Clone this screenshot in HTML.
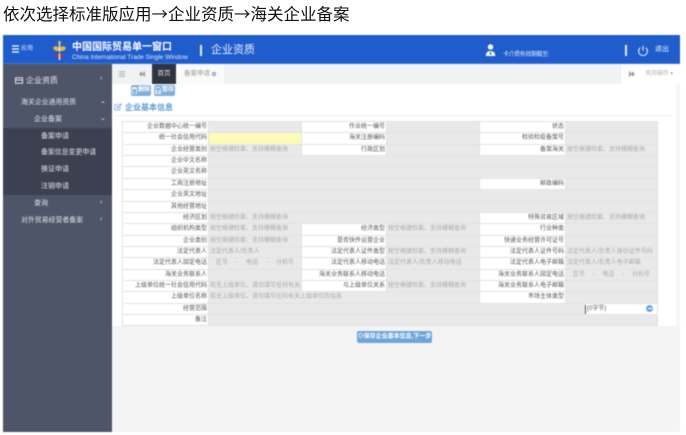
<!DOCTYPE html>
<html lang="zh">
<head>
<meta charset="utf-8">
<title>企业资质</title>
<style>
html,body{margin:0;padding:0;background:#fff;}
body{width:686px;height:435px;overflow:hidden;position:relative;font-family:"Liberation Sans","Noto Sans CJK SC",sans-serif;}
.a{position:absolute;white-space:nowrap;}
#title{left:3px;top:1px;font-size:16.5px;line-height:24px;color:#111;}
#title span{font-family:"Noto Sans CJK SC",sans-serif;}
#app{position:absolute;left:3px;top:35px;width:677px;height:397px;filter:blur(.5px);background:#fff;overflow:hidden;}
#head{left:0;top:0;width:677px;height:29px;background:#1f5ccc;border-bottom:1px solid #3d7bd8;box-sizing:border-box;}
#side{left:0;top:29px;width:109px;height:368px;background:#4e5568;}
#sub{left:0;top:93px;width:109px;height:67px;background:#3c4152;}
.m{color:#e2e4e9;font-size:7px;line-height:10px;}
.g{color:#e4e6ea;font-size:7px;line-height:10px;}
#tabs{left:109px;top:29px;width:509px;height:20px;background:#f1f2f3;}
#bottom{left:109px;top:291px;width:568px;height:106px;background:#f4f4f4;}
#grid{left:119px;top:86px;display:grid;grid-template-columns:85px 92px 84px 92px 85px 91px;grid-template-rows:repeat(18,10.36px);gap:1px;background:#e2e2e2;border:1px solid #e2e2e2;font-size:6px;line-height:10.36px;color:#555;}
#grid div{background:#e9e9e9;overflow:hidden;white-space:nowrap;}
#grid .l{background:#fff;text-align:right;padding-right:1px;}
#grid .p{color:#aaa;padding-left:1px;}
#grid .y{background:#fdfcb6;}
#grid .w{background:#fff;}
.s3{grid-column:span 3;}
.s5{grid-column:span 5;}
.tel{display:flex;justify-content:space-around;color:#aaa;padding:0 3px;}
.btn{background:#7fb0dc;color:#fff;font-size:6px;line-height:11px;height:11px;border-radius:2px;text-align:center;font-weight:bold;}
.ib{display:flex;align-items:center;justify-content:center;gap:1px;}
</style>
</head>
<body>
<div class="a" id="title">依次选择标准版应用<span>→</span>企业资质<span>→</span>海关企业备案</div>
<div id="app">
  <div class="a" id="head"></div>
  <!-- hamburger -->
  <svg class="a" style="left:9px;top:10px" width="8" height="8" viewBox="0 0 8 8"><path d="M0 1h7M0 4h7M0 7h7" stroke="#fff" stroke-width="1.2"/></svg>
  <div class="a" style="left:18px;top:9px;color:#dfe7f7;font-size:6px;line-height:10px">应用</div>
  <!-- logo -->
  <svg class="a" style="left:49px;top:5px" width="16" height="21" viewBox="0 0 16 21">
    <path d="M1 8c2-3 4.500-1.500 6.500 0 2-1.500 4.500-3 6.500 0-2 4-4.500 3-6.500 2.500-2 .5-4.500 1.500-6.500-2.500z" fill="#e8b83a"/>
    <path d="M2.500 12c1.500 4 3.500 6 5 8 1.500-2 3.500-4 5-8-2 2.500-3.500 3-5 3s-3-.5-5-3z" fill="#c9312b"/>
    <path d="M7.500 1v19" stroke="#f0f0d8" stroke-width="1.400"/>
    <circle cx="7.500" cy="2.500" r="1.500" fill="#e8b83a"/>
    <path d="M5 11c2 1.500 3 2 5 3M10 11c-2 1.500-3 2-5 3" stroke="#2a63b8" stroke-width=".8" fill="none"/>
  </svg>
  <div class="a" style="left:69px;top:6px;color:#fff;font-size:10px;line-height:13px;font-weight:bold">中国国际贸易单一窗口</div>
  <div class="a" style="left:69px;top:18px;color:#dfe7f7;font-size:6.400px;line-height:9px">China International Trade Single Window</div>
  <div class="a" style="left:197px;top:10px;width:1.500px;height:11px;background:#e8eefa"></div>
  <div class="a" style="left:208px;top:8px;color:#e6edfa;font-size:11px;line-height:15px">企业资质</div>
  <!-- user -->
  <svg class="a" style="left:482px;top:9px" width="11" height="13" viewBox="0 0 11 13">
    <circle cx="5.500" cy="3" r="2.700" fill="#fff"/>
    <path d="M.8 12c0-3.500 2-5 4.700-5s4.700 1.500 4.700 5z" fill="#fff"/>
    <path d="M5.500 7.500l-1 1.500 1 2.500 1-2.500z" fill="#1f5ccc"/>
  </svg>
  <div class="a" style="left:500px;top:16px;color:#dfe7f7;font-size:6px;line-height:9px;letter-spacing:-.4px">卡介质有效期截至:</div>
  <div class="a" style="left:622px;top:10px;width:1.500px;height:11px;background:#e8eefa"></div>
  <svg class="a" style="left:634px;top:10px" width="12" height="12" viewBox="0 0 12 12"><path d="M3.300 2.600a4.400 4.400 0 1 0 5.400 0M6 .8v5" stroke="#f2f5fc" stroke-width="1" fill="none"/></svg>
  <div class="a" style="left:652px;top:10px;color:#eef2fb;font-size:7px;line-height:10px">退出</div>

  <div class="a" id="side"></div>
  <div class="a" id="sub"></div>
  <svg class="a" style="left:12px;top:42px" width="8" height="7" viewBox="0 0 8 7"><path d="M.5.8h7v5.400h-7zM.5 3h7" stroke="#e0e2e8" fill="none"/></svg>
  <div class="a" style="left:23px;top:40px;color:#e6e8ec;font-size:8px;line-height:11px">企业资质</div>
  <div class="a m" style="left:97px;top:39px">‹</div>
  <div class="a m" style="left:18px;top:63px;font-size:6.900px">海关企业通用资质</div>
  <div class="a m" style="left:97px;top:62px">⌄</div>
  <div class="a m" style="left:31px;top:80px">企业备案</div>
  <div class="a m" style="left:97px;top:79px">⌄</div>
  <div class="a g" style="left:38px;top:97px">备案申请</div>
  <div class="a g" style="left:38px;top:113px;font-size:6.900px">备案信息变更申请</div>
  <div class="a g" style="left:38px;top:130px">换证申请</div>
  <div class="a g" style="left:38px;top:147px">注销申请</div>
  <div class="a m" style="left:31px;top:164px">查询</div>
  <div class="a m" style="left:97px;top:163px">‹</div>
  <div class="a m" style="left:18px;top:181px;font-size:6.900px">对外贸易经营者备案</div>
  <div class="a m" style="left:97px;top:180px">‹</div>

  <div class="a" id="tabs"></div>
  <svg class="a" style="left:116px;top:36px" width="7" height="6" viewBox="0 0 7 6"><path d="M0 .7h6M0 3h6M0 5.300h6" stroke="#aaa"/></svg>
  <svg class="a" style="left:136px;top:36px" width="7" height="6" viewBox="0 0 7 6"><path d="M3 0v6L0 3zM6 0v6L3 3z" fill="#999"/></svg>
  <div class="a" style="left:149px;top:29px;width:24px;height:20px;background:#30343f;color:#e0e2e8;font-size:6.500px;line-height:20px;text-align:center">首页</div>
  <div class="a" style="left:173px;top:29px;width:48px;height:20px;background:#fafafa;color:#9a9a9a;font-size:6.500px;line-height:20px;padding-left:8px;box-sizing:border-box">备案申请</div>
  <div class="a" style="left:209px;top:37px;width:2px;height:2px;border:1.500px solid #5f93d2;border-radius:50%"></div>
  <div class="a" style="left:617px;top:29px;width:1px;height:20px;background:#eee"></div>
  <svg class="a" style="left:626px;top:36px" width="7" height="6" viewBox="0 0 7 6"><path d="M0 0v6l3-3zM3 0v6l3-3z" fill="#999"/><path d="M.5 0v6" stroke="#999" stroke-width=".5"/></svg>
  <div class="a" style="left:642px;top:34px;color:#b0b0b0;font-size:6px;line-height:10px;letter-spacing:-.1px">关闭操作 ▾</div>

  <div class="a btn ib" style="left:128px;top:50px;width:20px"><svg width="5" height="7" viewBox="0 0 5 7"><path d="M.5 1.500h4V7h-4zM0 .7h5" stroke="#fff" fill="none" stroke-width=".8"/></svg><span>删除</span></div>
  <div class="a btn ib" style="left:151px;top:50px;width:21px"><svg width="6" height="7" viewBox="0 0 6 7"><path d="M.5.5h4l1 1v5h-5zM1.500 4h3v2.500h-3z" stroke="#fff" fill="none" stroke-width=".7"/></svg><span>暂存</span></div>
  <svg class="a" style="left:111px;top:68px" width="8" height="8" viewBox="0 0 8 8"><path d="M6 4.500V7H.7V1.500h3M3 5l.3-1.500L6.500.7l1 1L4.500 4.800z" stroke="#76a8da" stroke-width=".8" fill="none"/></svg>
  <div class="a" style="left:122px;top:67px;color:#5b9bd8;font-size:8px;line-height:11px;font-weight:bold">企业基本信息</div>
  <div class="a" style="left:111px;top:80px;width:559px;height:1px;background:#eee"></div>
  <div class="a" style="left:673px;top:49px;width:4px;height:242px;background:#f6f6f6"></div>

  <div class="a" id="grid">
    <div class="l">企业数据中心统一编号</div><div></div><div class="l">作业统一编号</div><div></div><div class="l">状态</div><div></div>
    <div class="l">统一社会信用代码</div><div class="y"></div><div class="l">海关注册编码</div><div></div><div class="l">检验检疫备案号</div><div></div>
    <div class="l">企业经营类别</div><div class="p">按空格键检索、支持模糊查询</div><div class="l">行政区划</div><div></div><div class="l">备案海关</div><div class="p">按空格键检索、支持模糊查询</div>
    <div class="l">企业中文名称</div><div class="s5"></div>
    <div class="l">企业英文名称</div><div class="s5"></div>
    <div class="l">工商注册地址</div><div class="s3"></div><div class="l">邮政编码</div><div></div>
    <div class="l">企业英文地址</div><div class="s5"></div>
    <div class="l">其他经营地址</div><div class="s5"></div>
    <div class="l">经济区划</div><div class="p s3">按空格键检索、支持模糊查询</div><div class="l">特殊贸易区域</div><div class="p">按空格键检索、支持模糊查询</div>
    <div class="l">组织机构类型</div><div class="p">按空格键检索、支持模糊查询</div><div class="l">经济类型</div><div class="p">按空格键检索、支持模糊查询</div><div class="l">行业种类</div><div></div>
    <div class="l">企业类别</div><div class="p">按空格键检索、支持模糊查询</div><div class="l">是否快件运营企业</div><div></div><div class="l">快递业务经营许可证号</div><div></div>
    <div class="l">法定代表人</div><div class="p">法定代表人/负责人</div><div class="l">法定代表人证件类型</div><div class="p">按空格键检索、支持模糊查询</div><div class="l">法定代表人证件号码</div><div class="p">法定代表人/负责人身份证件号码</div>
    <div class="l">法定代表人固定电话</div><div class="tel"><span>区号</span><span>-</span><span>电话</span><span>-</span><span>分机号</span></div><div class="l">法定代表人移动电话</div><div class="p">法定代表人/负责人移动电话</div><div class="l">法定代表人电子邮箱</div><div class="p">法定代表人/负责人电子邮箱</div>
    <div class="l">海关业务联系人</div><div></div><div class="l">海关业务联系人移动电话</div><div></div><div class="l">海关业务联系人固定电话</div><div class="tel"><span>区号</span><span>-</span><span>电话</span><span>-</span><span>分机号</span></div>
    <div class="l">上级单位统一社会信用代码</div><div class="p">若无上级单位，请勿填写任何有关。</div><div class="l">与上级单位关系</div><div class="p">按空格键检索、支持模糊查询</div><div class="l">海关业务联系人电子邮箱</div><div></div>
    <div class="l">上级单位名称</div><div class="p s3">若无上级单位，请勿填写任何有关上级单位的信息</div><div class="l">市场主体类型</div><div></div>
    <div class="l">经营范围</div><div class="s5" style="background:linear-gradient(90deg,#e9e9e9 0 376px,#fff 376px);padding-left:378px;box-sizing:border-box;color:#555">(0字节)</div>
    <div class="l">备注</div><div class="s5"></div>
  </div>
  <div class="a" style="left:582px;top:270px;width:1px;height:9px;background:#555"></div>
  <div class="a" style="left:643px;top:270px;width:7px;height:7px;border-radius:50%;background:#6ea6e0"></div>
  <div class="a" style="left:644.500px;top:273px;width:4px;height:1px;background:#fff"></div>

  <div class="a" id="bottom"></div>
  <div class="a btn" style="left:354px;top:296px;width:75px;height:12px;line-height:12px;background:#6ea6dc">⊙保存企业基本信息,下一步</div>
</div>
</body>
</html>
